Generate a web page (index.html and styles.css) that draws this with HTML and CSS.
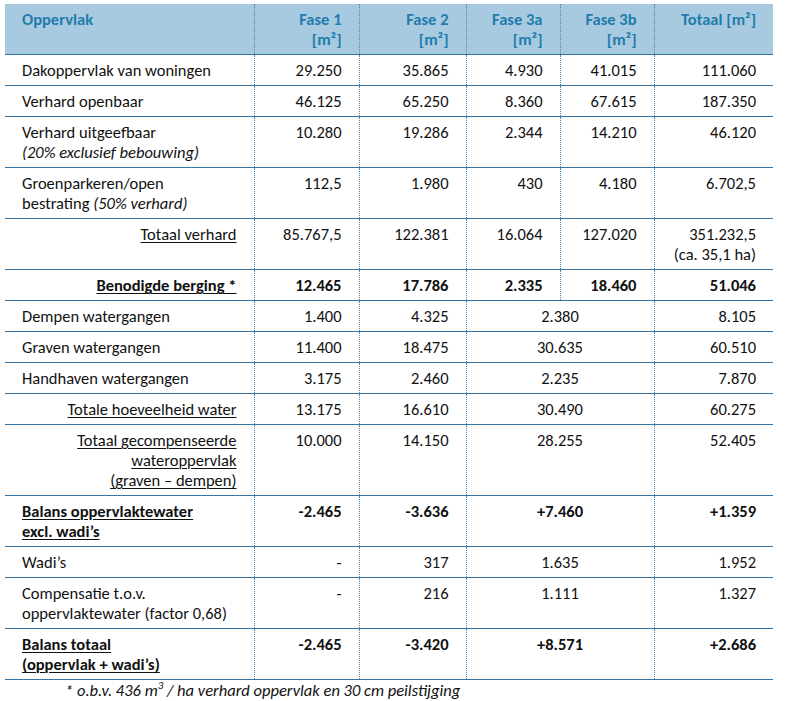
FILE: index.html
```html
<!DOCTYPE html>
<html lang="nl">
<head>
<meta charset="utf-8">
<link rel="stylesheet" href="styles.css">
</head>
<body>
<div class="page">
<table class="tbl">
  <colgroup>
    <col class="c1"><col class="c2"><col class="c3"><col class="c4"><col class="c5"><col class="c6">
  </colgroup>
  <thead>
    <tr>
      <th class="l">Oppervlak</th>
      <th>Fase 1<br>[m²]</th>
      <th>Fase 2<br>[m²]</th>
      <th>Fase 3a<br>[m²]</th>
      <th>Fase 3b<br>[m²]</th>
      <th>Totaal [m²]</th>
    </tr>
  </thead>
  <tbody>
    <tr><td class="l">Dakoppervlak van woningen</td><td>29.250</td><td>35.865</td><td>4.930</td><td>41.015</td><td>111.060</td></tr>
    <tr><td class="l">Verhard openbaar</td><td>46.125</td><td>65.250</td><td>8.360</td><td>67.615</td><td>187.350</td></tr>
    <tr><td class="l">Verhard uitgeefbaar<br><em>(20% exclusief bebouwing)</em></td><td>10.280</td><td>19.286</td><td>2.344</td><td>14.210</td><td>46.120</td></tr>
    <tr><td class="l">Groenparkeren/open<br>bestrating <em>(50% verhard)</em></td><td>112,5</td><td>1.980</td><td>430</td><td>4.180</td><td>6.702,5</td></tr>
    <tr><td><u>Totaal verhard</u></td><td>85.767,5</td><td>122.381</td><td>16.064</td><td>127.020</td><td>351.232,5<br>(ca. 35,1 ha)</td></tr>
    <tr class="b"><td><u>Benodigde berging *</u></td><td>12.465</td><td>17.786</td><td>2.335</td><td>18.460</td><td>51.046</td></tr>
    <tr><td class="l">Dempen watergangen</td><td>1.400</td><td>4.325</td><td class="m" colspan="2">2.380</td><td>8.105</td></tr>
    <tr><td class="l">Graven watergangen</td><td>11.400</td><td>18.475</td><td class="m" colspan="2">30.635</td><td>60.510</td></tr>
    <tr><td class="l">Handhaven watergangen</td><td>3.175</td><td>2.460</td><td class="m" colspan="2">2.235</td><td>7.870</td></tr>
    <tr><td><u>Totale hoeveelheid water</u></td><td>13.175</td><td>16.610</td><td class="m" colspan="2">30.490</td><td>60.275</td></tr>
    <tr><td><u>Totaal gecompenseerde<br>wateroppervlak<br>(graven – dempen)</u></td><td>10.000</td><td>14.150</td><td class="m" colspan="2">28.255</td><td>52.405</td></tr>
    <tr class="b"><td class="l"><u>Balans oppervlaktewater<br>excl. wadi’s</u></td><td>-2.465</td><td>-3.636</td><td class="m" colspan="2">+7.460</td><td>+1.359</td></tr>
    <tr><td class="l">Wadi’s</td><td>-</td><td>317</td><td class="m" colspan="2">1.635</td><td>1.952</td></tr>
    <tr><td class="l">Compensatie t.o.v.<br>oppervlaktewater (factor 0,68)</td><td>-</td><td>216</td><td class="m" colspan="2">1.111</td><td>1.327</td></tr>
    <tr class="b"><td class="l"><u>Balans totaal<br>(oppervlak + wadi’s)</u></td><td>-2.465</td><td>-3.420</td><td class="m" colspan="2">+8.571</td><td>+2.686</td></tr>
  </tbody>
</table>
<p class="note">* o.b.v. 436 m<sup>3</sup> / ha verhard oppervlak en 30 cm peilstijging</p>
</div>
</body>
</html>
```

FILE: styles.css
```css
html, body {
  margin: 0;
  padding: 0;
  background: #ffffff;
}
body {
  font-family: "Carlito", "Lato", "Liberation Sans", sans-serif;
  font-size: 16.5px;
  color: #111111;
}
.page {
  padding: 4px 12px 0 5px;
}
.tbl {
  border-collapse: collapse;
  table-layout: fixed;
  width: 768px;
}
.c1 { width: 249px; }
.c2 { width: 105px; }
.c3 { width: 107px; }
.c4 { width: 94px; }
.c5 { width: 94px; }
.c6 { width: 119px; }
.tbl th,
.tbl td {
  padding: 5px 17px 5px 17px;
  line-height: 20px;
  vertical-align: top;
  text-align: right;
  border-bottom: 1px solid #3677a8;
  border-left: 1px dotted #4a86b4;
  white-space: nowrap;
}
.tbl th:first-child,
.tbl td:first-child {
  border-left: none;
}
.tbl thead th {
  background: #a8cae0;
  color: #1f7cab;
  font-weight: bold;
}
.tbl .l { text-align: left; }
.tbl .m { text-align: center; }
.tbl tr.b td { font-weight: bold; }
.tbl u { text-decoration-thickness: 1px; text-underline-offset: 2px; }
.note {
  margin: 0;
  padding: 0 0 0 60px;
  font-style: italic;
  line-height: 20px;
}
.note sup {
  font-size: 11px;
  line-height: 0;
  vertical-align: 7px;
}
```
